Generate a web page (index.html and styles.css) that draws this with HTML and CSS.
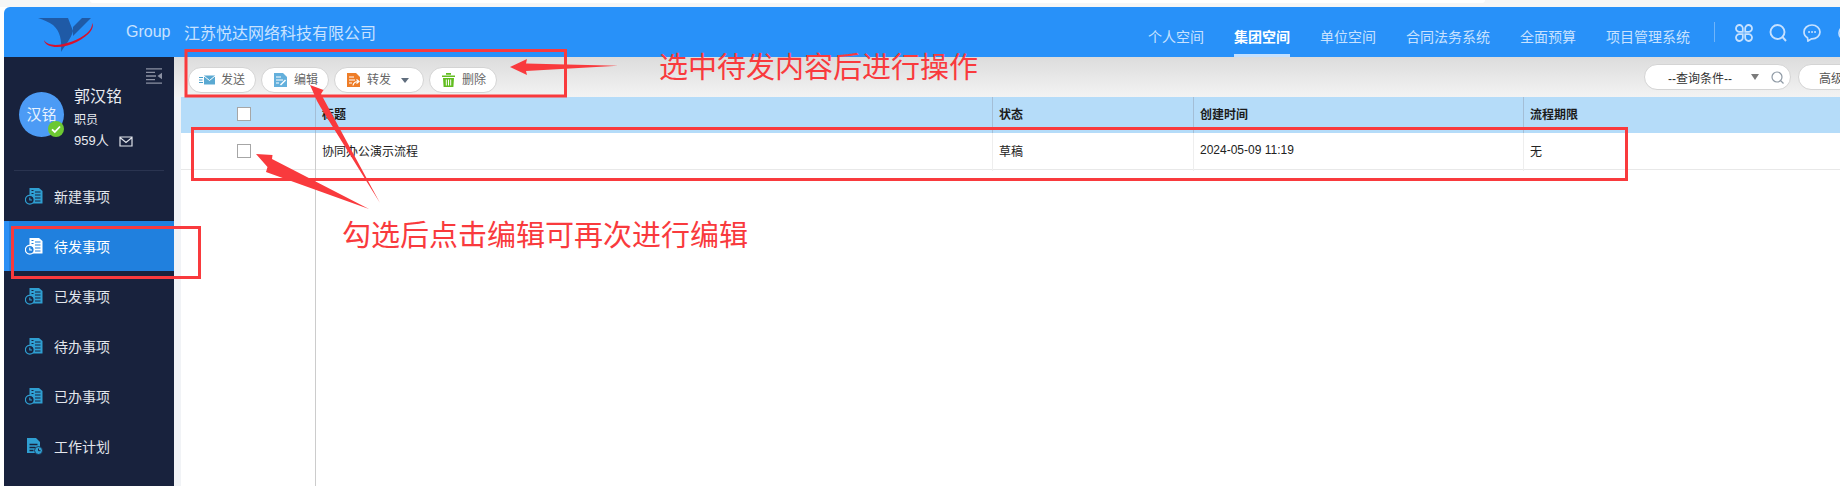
FILE: index.html
```html
<!DOCTYPE html>
<html lang="zh-CN">
<head>
<meta charset="utf-8">
<title>待发事项</title>
<link rel="stylesheet" href="styles.css">
</head>
<body>
<svg class="defs" width="0" height="0" aria-hidden="true">
  <defs>
    <symbol id="doc" viewBox="0 0 18 18">
      <path d="M4.500 1H14l3.500 3v12.500h-13z" fill="currentColor"/>
      <path d="M10 5h5.500M10 8h5.500M10 11h5.500M10 14h5.500M6.500 3.500h2M6.500 6.500h2" stroke="var(--doc-line)" stroke-width="1.200"/>
      <circle cx="4.800" cy="12.800" r="4.400" fill="var(--doc-line)" stroke="currentColor" stroke-width="1.200"/>
      <path d="M4.800 10.500v2.500h2.200" fill="none" stroke="currentColor" stroke-width="1.100"/>
    </symbol>
  </defs>
</svg>
<div class="topstrip"><div class="tab-edge"></div></div>
<div class="app">
  <header class="header">
    <svg class="logo" viewBox="33 18 66 36" width="66" height="36">
      <path d="M38 20H68L73 33C71 41 65 47 61 54C62 42 60 33 53 27C49 24 44 22 38 20Z" fill="#1f5aa6"/>
      <path d="M73 38L73 29L82 20H91Z" fill="#1f5aa6"/>
      <path d="M44 42C45 50 60 51 72 46C85 41 96 31 92 25C93 32 84 39 72 43.500C61 47.500 48 49 44 42Z" fill="#d8112c"/>
    </svg>
    <span class="group">Group</span>
    <span class="company">江苏悦达网络科技有限公司</span>
    <nav class="nav">
      <a class="nav-item">个人空间</a>
      <a class="nav-item active">集团空间</a>
      <a class="nav-item">单位空间</a>
      <a class="nav-item">合同法务系统</a>
      <a class="nav-item">全面预算</a>
      <a class="nav-item">项目管理系统</a>
    </nav>
    <span class="head-rule"></span>
    <div class="head-icons">
      <svg viewBox="0 0 18 18" width="18" height="18" fill="none" stroke="#c6e1ff" stroke-width="1.800">
        <path d="M7.800 7.800H4.500A3.400 3.400 0 1 1 7.800 4.500ZM10.200 7.800V4.500A3.400 3.400 0 1 1 13.500 7.800ZM7.800 10.200V13.500A3.400 3.400 0 1 1 4.500 10.200ZM10.200 10.200H13.500A3.400 3.400 0 1 1 10.200 13.500Z"/>
      </svg>
      <svg viewBox="0 0 18 18" width="18" height="18" fill="none" stroke="#c6e1ff" stroke-width="1.900">
        <circle cx="8.500" cy="8" r="7"/><path d="M13.500 13l3.500 4"/>
      </svg>
      <svg viewBox="0 0 18 18" width="18" height="18" fill="none" stroke="#c6e1ff" stroke-width="1.700">
        <path d="M9 1C4.500 1 1 4 1 8c0 2.500 1.300 4.500 3.500 5.800L5 17l3.500-2.200H9c4.500 0 8-3 8-6.800S13.500 1 9 1Z"/>
        <path d="M5.300 8h1.500M8.300 8h1.500M11.300 8h1.500" stroke-width="2"/>
      </svg>
      <svg viewBox="0 0 18 18" width="18" height="18" fill="none" stroke="#c6e1ff" stroke-width="1.700">
        <circle cx="9" cy="9" r="7"/>
      </svg>
    </div>
  </header>
  <div class="body">
    <aside class="sidebar">
      <div class="toggle-row">
        <svg viewBox="0 0 16 16" width="16" height="16">
          <path d="M0 .8h16M0 8h10M0 15.200h16M0 4.400h9M0 11.600h9" stroke="#8b91a3" stroke-width="1.300"/>
          <path d="M11.500 8L16 4.800v6.400z" fill="#8b91a3"/>
        </svg>
      </div>
      <div class="profile">
        <div class="avatar">汉铭
          <span class="badge">
            <svg viewBox="0 0 16 16" width="16" height="16"><path d="M4 8.300l2.800 2.700L12 5.500" fill="none" stroke="#fff" stroke-width="1.800"/></svg>
          </span>
        </div>
        <div class="who">
          <div class="name">郭汉铭</div>
          <div class="role">职员</div>
          <div class="count">959人
            <svg viewBox="0 0 14 11" width="14" height="11" fill="none" stroke="#dfe3ea" stroke-width="1.200"><path d="M1 1h12v9H1zM1 1.500l6 5 6-5"/></svg>
          </div>
        </div>
      </div>
      <ul class="menu">
        <li class="menu-item"><svg class="menu-icon" width="18" height="18"><use href="#doc"/></svg>新建事项</li>
        <li class="menu-item current"><svg class="menu-icon" width="18" height="18"><use href="#doc"/></svg>待发事项</li>
        <li class="menu-item"><svg class="menu-icon" width="18" height="18"><use href="#doc"/></svg>已发事项</li>
        <li class="menu-item"><svg class="menu-icon" width="18" height="18"><use href="#doc"/></svg>待办事项</li>
        <li class="menu-item"><svg class="menu-icon" width="18" height="18"><use href="#doc"/></svg>已办事项</li>
        <li class="menu-item">
          <svg class="menu-icon" viewBox="0 0 18 18" width="18" height="18">
            <path d="M2 1h9l4 4v11H2z" fill="#2f9fd2"/>
            <path d="M4.500 7.500h8M4.500 10.500h6M4.500 13.500h4" stroke="#18223d" stroke-width="1.300"/>
            <circle cx="13.500" cy="13.500" r="4" fill="#2f9fd2" stroke="#18223d" stroke-width=".8"/>
            <path d="M13.500 11.500v2.200h2" fill="none" stroke="#18223d" stroke-width="1"/>
          </svg>工作计划
        </li>
      </ul>
    </aside>
    <main class="main">
      <div class="toolbar">
        <button class="btn">
          <svg viewBox="0 0 16 10" width="16" height="10"><path d="M0 2.500h4M0 5h3.500M0 7.500h4" stroke="#4a9fc9" stroke-width="1.200"/><path d="M5 .5h11v9H5z" fill="#5aa9d2"/><path d="M5 1l5.500 4.500L16 1" fill="none" stroke="#fff" stroke-width="1"/></svg>
          发送
        </button>
        <button class="btn">
          <svg viewBox="0 0 13 14" width="13" height="14"><path d="M0 0h9l4 4v10H0z" fill="#64b0dc"/><path d="M2 4h5M2 7h7M2 10h3" stroke="#fff" stroke-width="1.200"/><path d="M6.500 12l5-5" stroke="#fff" stroke-width="1.500"/></svg>
          编辑
        </button>
        <button class="btn">
          <svg viewBox="0 0 13 14" width="13" height="14"><path d="M0 0h9l4 4v10H0z" fill="#ee7d28"/><path d="M2 4h5M2 7h6M2 10h3" stroke="#fff" stroke-width="1.200"/><path d="M6 12.500c.5-3 3-4 5-4M9.500 6.500l2.500 2-2.500 2" fill="none" stroke="#fff" stroke-width="1.200"/></svg>
          转发
          <span class="caret"></span>
        </button>
        <button class="btn">
          <svg viewBox="0 0 13 14" width="13" height="14" fill="#62bd20"><path d="M0 2.500h13V4H0zM4 0h5v1.800H4zM1 5h11l-.6 9H1.600z"/><path d="M4.300 6.500v6M6.500 6.500v6M8.700 6.500v6" stroke="#fff" stroke-width="1"/></svg>
          删除
        </button>
        <div class="query">
          <span class="query-text">--查询条件--</span>
          <span class="query-caret"></span>
          <svg viewBox="0 0 13 13" width="13" height="13" fill="none" stroke="#8f9aa5" stroke-width="1.200"><circle cx="6" cy="6" r="5"/><path d="M9.500 9.500l3 3"/></svg>
        </div>
        <button class="adv">高级</button>
      </div>
      <div class="grid head">
        <div class="cell check"><span class="box"></span></div>
        <div class="cell">标题</div>
        <div class="cell">状态</div>
        <div class="cell">创建时间</div>
        <div class="cell">流程期限</div>
        <div class="cell"></div>
      </div>
      <div class="grid row">
        <div class="cell check"><span class="box"></span></div>
        <div class="cell">协同办公演示流程</div>
        <div class="cell">草稿</div>
        <div class="cell date">2024-05-09 11:19</div>
        <div class="cell">无</div>
        <div class="cell"></div>
      </div>
      <div class="rest"><div class="rest-col"></div></div>
    </main>
  </div>
</div>
<svg class="marks" width="1840" height="486" viewBox="0 0 1840 486" aria-hidden="true">
  <g fill="none" stroke="#f93a3d" stroke-width="3">
    <rect x="186" y="50.500" width="379.500" height="45.500"/>
    <rect x="192.500" y="128.500" width="1434" height="51"/>
    <rect x="12.500" y="227.500" width="187" height="50"/>
  </g>
  <g fill="#f93a3d">
    <path d="M510 67L527 59L526 63.500L618 65.800L526 71L527 75Z"/>
    <path d="M310 85L323.500 90L321 94L380 203L321 108L317 101Z"/>
    <path d="M256 154L272.500 155L272 159L369 209L266 172L267.500 167Z"/>
  </g>
</svg>
<div class="note note-top">选中待发内容后进行操作</div>
<div class="note note-bottom">勾选后点击编辑可再次进行编辑</div>
</body>
</html>
```
FILE: styles.css
```css
* { box-sizing: border-box; }
html, body { margin: 0; padding: 0; }
body {
  width: 1840px;
  height: 486px;
  overflow: hidden;
  position: relative;
  background: #fff;
  font-family: "Liberation Sans", "Noto Sans CJK SC", sans-serif;
  display: flex;
  flex-direction: column;
}
.defs { position: absolute; }
.topstrip { height: 7px; background: #f6f6f6; flex: none; padding-left: 90px; }
.tab-edge { width: 1395px; height: 3px; background: #fff; border-radius: 0 0 6px 6px; }
.app { flex: 1; min-height: 0; margin-left: 4px; display: flex; flex-direction: column; }

.header {
  height: 50px;
  flex: none;
  background: #2891f9;
  border-radius: 6px 0 0 0;
  display: flex;
  align-items: center;
  overflow: hidden;
  color: #c8e2ff;
}
.logo { margin: 4px 0 0 29px; flex: none; }
.group { margin-left: 27px; font-size: 16px; width: 58px; flex: none; }
.company { font-size: 16px; flex: none; width: 192px; }
.nav { margin-left: 772px; display: flex; gap: 30px; align-self: stretch; flex: none; }
.nav-item {
  font-size: 14px;
  line-height: 20px;
  padding-top: 20px;
  border-bottom: 3px solid transparent;
  color: #c8e2ff;
}
.nav-item.active { color: #fff; font-weight: 700; border-bottom-color: #c3e0ff; }
.head-rule { width: 1px; height: 20px; background: #6fb4fa; margin: 0 0 0 24px; flex: none; }
.head-icons { display: flex; gap: 16px; margin-left: 20px; flex: none; align-self: flex-start; padding-top: 17px; }
.head-icons svg { flex: none; }

.body { flex: 1; min-height: 0; display: flex; }
.sidebar {
  width: 170px;
  flex: none;
  background: #18223d;
  color: #e8ebf0;
}
.toggle-row { display: flex; justify-content: flex-end; padding: 11px 12px 0 0; height: 35px; }
.profile {
  margin: 0 10px;
  height: 79px;
  border-bottom: 1px solid #2a3450;
  display: flex;
  padding-left: 5px;
  gap: 10px;
}
.avatar {
  width: 45px;
  height: 45px;
  border-radius: 50%;
  background: #4c9bf5;
  color: #e8f2ff;
  font-size: 15px;
  line-height: 45px;
  text-align: center;
  position: relative;
  flex: none;
}
.badge {
  position: absolute;
  right: 0;
  bottom: 0;
  width: 16px;
  height: 16px;
  border-radius: 50%;
  background: #6cc832;
  display: flex;
}
.who { margin-top: -7px; }
.name { font-size: 16px; line-height: 24px; }
.role { font-size: 12px; line-height: 18px; margin-top: 2px; }
.count { font-size: 13px; line-height: 20px; margin-top: 2px; display: flex; align-items: center; gap: 10px; }
.menu { list-style: none; margin: 0; padding: 0; }
.menu-item {
  height: 50px;
  display: flex;
  align-items: center;
  font-size: 14px;
  padding-left: 21px;
  gap: 11px;
  --doc-line: #18223d;
  color: #e3e6ec;
}
.menu-icon { flex: none; color: #2f9fd2; }
.menu-item.current { background: #2080de; border-left: 5px solid #2b8ff5; padding-left: 16px; color: #fff; --doc-line: #2080de; }
.current .menu-icon { color: #fff; }

.main { flex: 1; min-width: 0; margin-left: 7px; display: flex; flex-direction: column; color: #222; position: relative; }
.main::before { content: ""; position: absolute; left: -7px; top: 40px; bottom: 0; width: 7px; background: #f1f3f6; }
.toolbar {
  height: 40px;
  flex: none;
  background: linear-gradient(#dcdcdc, #f3f3f3);
  display: flex;
  align-items: flex-start;
  padding: 10px 0 0 7px;
  gap: 5px;
  margin-left: -7px;
  overflow: hidden;
}
.btn {
  height: 26px;
  padding: 0 10px;
  border: 1px solid #d4d4d4;
  border-radius: 13px;
  background: #fff;
  font: 12px/24px "Liberation Sans", "Noto Sans CJK SC", sans-serif;
  color: #666;
  display: flex;
  align-items: center;
  gap: 7px;
  flex: none;
  min-width: 67px;
}
.btn:first-child { margin-left: 7px; padding-left: 10px; gap: 6px; }
.btn:nth-child(2) { padding-left: 12px; }
.btn:nth-child(3) { padding-left: 12px; width: 90px; }
.btn:nth-child(4) { padding-left: 12px; }
.caret { border: 4.500px solid transparent; border-top: 5px solid #5f6d7d; border-bottom: 0; margin-left: 3px; }
.query {
  margin-left: auto;
  height: 26px;
  width: 147px;
  margin-top: -3px;
  border: 1px solid #d4d4d4;
  border-radius: 13px;
  background: #fff;
  display: flex;
  align-items: center;
  font-size: 12px;
  color: #333;
  padding-left: 23px;
  flex: none;
}
.query-text { width: 83px; flex: none; }
.query-caret { border: 4px solid transparent; border-top: 6px solid #7b7b7b; border-bottom: 0; margin-right: 12px; }
.adv {
  height: 26px;
  width: 60px;
  margin: -3px -18px 0 2px;
  border: 1px solid #d4d4d4;
  border-radius: 13px;
  background: #fff;
  color: #555;
  font: 12px "Liberation Sans", "Noto Sans CJK SC", sans-serif;
  flex: none;
  text-align: left;
  padding-left: 20px;
}

.grid { display: grid; grid-template-columns: 134px 677px 201px 330px 1fr; flex: none; font-size: 12px; }
.head { height: 36px; background: #b5dcf9; font-weight: 700; color: #1b1b1b; line-height: 36px; }
.row { height: 37px; background: #fff; border-bottom: 1px solid #e8e8e8; line-height: 38px; color: #222; }
.cell { padding-left: 6px; position: relative; }
.head .cell + .cell { border-left: 1px solid #a4bed6; }
.row .cell + .cell { border-left: 1px solid #eee; }
.row .cell:nth-child(2) { border-left-color: #ccc; }
.grid .check { display: flex; justify-content: center; padding: 0 8px 0 0; }
.head .check { padding-top: 10px; }
.row .check { padding-top: 11px; }
.box { display: block; width: 14px; height: 14px; border: 1px solid #a6a6a6; background: #fff; }
.date { line-height: 34px; }
.rest { flex: 1; display: flex; }
.rest-col { width: 135px; border-right: 1px solid #ccc; }

.marks { position: absolute; left: 0; top: 0; pointer-events: none; }
.note {
  position: absolute;
  font-family: "Noto Sans CJK SC", sans-serif;
  font-size: 29px;
  line-height: 40px;
  color: #f93a3d;
  white-space: nowrap;
}
.note-top { left: 659px; top: 45px; }
.note-bottom { left: 342px; top: 213px; }
```
